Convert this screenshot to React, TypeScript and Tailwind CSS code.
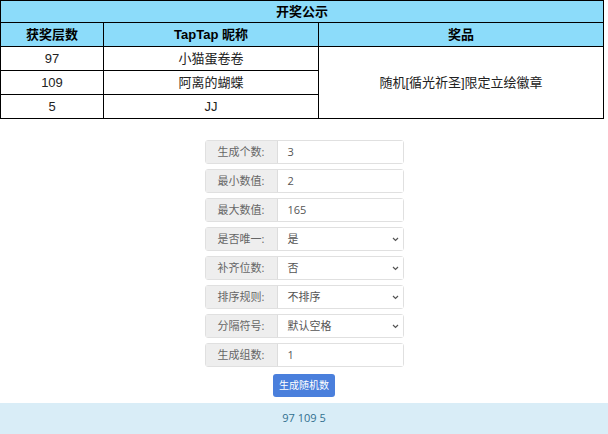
import React from "react";

const F = { fontFamily: '"Liberation Sans","Noto Sans CJK SC",sans-serif' };
const F2 = { fontFamily: '"Open Sans","Noto Sans CJK SC",sans-serif' };

function Row({ label, value, select }: { label: string; value: string; select?: boolean }) {
  return (
    <div className="flex h-[24px] w-[199px] rounded-[3px] border border-[#e0e0e0] text-[11px]">
      <div className="w-[72px] flex items-center justify-center bg-[#eeeeee] border-r border-[#dddddd] text-[#666]">{label}</div>
      <div className="flex-1 flex items-center justify-between pl-[10px] pr-[4px] bg-white text-[#555]">
        <span>{value}</span>
        {select && (
          <svg width="7" height="5" viewBox="0 0 7 5"><path d="M1 1l2.5 2.5L6 1" stroke="#555" strokeWidth="1.2" fill="none" /></svg>
        )}
      </div>
    </div>
  );
}

export default function App() {
  const cell = "border-r border-b border-black text-center";
  return (
    <div className="w-[608px] h-[434px] bg-white overflow-hidden relative" style={F}>
      <div className="w-[604px] border-l border-black text-[13px]">
        <div className="h-[23px] bg-[#8cdcfa] border-t border-r border-b border-black flex items-center justify-center font-bold text-black">开奖公示</div>
        <div className="flex">
          <div className="w-[318px]">
            <div className="flex h-[24px] bg-[#8cdcfa] font-bold">
              <div className={`${cell} w-[103px] flex items-center justify-center`}>获奖层数</div>
              <div className={`${cell} w-[215px] flex items-center justify-center`}>TapTap 昵称</div>
            </div>
            {[["97", "小猫蛋卷卷"], ["109", "阿离的蝴蝶"], ["5", "JJ"]].map(([a, b]) => (
              <div key={a} className="flex h-[24px] text-[#222]">
                <div className={`${cell} w-[103px] flex items-center justify-center`}>{a}</div>
                <div className={`${cell} w-[215px] flex items-center justify-center`}>{b}</div>
              </div>
            ))}
          </div>
          <div className="flex-1 flex flex-col">
            <div className={`${cell} h-[24px] bg-[#8cdcfa] font-bold flex items-center justify-center`}>奖品</div>
            <div className={`${cell} flex-1 flex items-center justify-center text-[#222]`}>随机[循光祈圣]限定立绘徽章</div>
          </div>
        </div>
      </div>
      <div className="flex flex-col items-center pt-[21px] gap-[5px]" style={F2}>
        <Row label="生成个数:" value="3" />
        <Row label="最小数值:" value="2" />
        <Row label="最大数值:" value="165" />
        <Row label="是否唯一:" value="是" select />
        <Row label="补齐位数:" value="否" select />
        <Row label="排序规则:" value="不排序" select />
        <Row label="分隔符号:" value="默认空格" select />
        <Row label="生成组数:" value="1" />
        <button className="mt-[2px] h-[23px] w-[62px] rounded-[3px] bg-[#4a7fdc] text-white text-[10px]">生成随机数</button>
      </div>
      <div className="absolute left-0 right-0 top-[403px] h-[31px] bg-[#d9edf7] flex items-center justify-center text-[11px] text-[#31708f]" style={F2}>97 109 5</div>
    </div>
  );
}
